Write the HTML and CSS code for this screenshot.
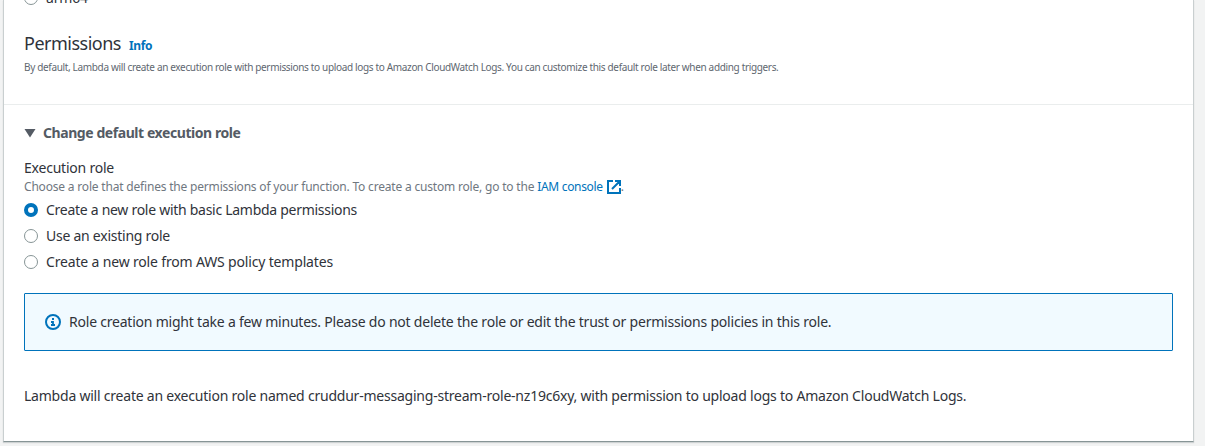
FILE: index.html
```html
<!DOCTYPE html>
<html lang="en"><head><meta charset="utf-8"><title>Create function</title>
<link rel="stylesheet" href="styles.css"></head>
<body>
<main class="card">
<section class="permissions">
<div class="option arch"><span class="radio"></span><span class="t t-arch">arm64</span></div>
<div class="heading"><h2><span class="t t-perm">Permissions</span></h2><a class="info t t-info">Info</a></div>
<p class="desc"><span class="t t-desc">By default, Lambda will create an execution role with permissions to upload logs to Amazon CloudWatch Logs. You can customize this default role later when adding triggers.</span></p>
</section>
<section class="role">
<div class="expander"><svg width="12" height="10" viewBox="0 0 12 10"><path d="M.5 1h11L6 9.5z" fill="#545b64"/></svg><span class="t t-exp">Change default execution role</span></div>
<div class="label"><span class="t t-label">Execution role</span></div>
<div class="hint"><span class="t t-hint">Choose a role that defines the permissions of your function. To create a custom role, go to the</span><a class="t t-iam">IAM console</a><svg class="ext" width="16" height="16" viewBox="0 0 16 16" fill="none" stroke="#0073bb" stroke-width="2"><path d="M7 2H2v12h12V9M9 2h5v5M6 10l8-8"/></svg><span class="dot">.</span></div>
<div class="options">
<div class="option"><span class="radio on"></span><span class="t t-o1">Create a new role with basic Lambda permissions</span></div>
<div class="option"><span class="radio"></span><span class="t t-o2">Use an existing role</span></div>
<div class="option"><span class="radio"></span><span class="t t-o3">Create a new role from AWS policy templates</span></div>
</div>
<div class="alert"><svg width="16" height="16" viewBox="0 0 16 16" fill="none" stroke="#0073bb" stroke-width="2"><circle cx="8" cy="8" r="7"/><path d="M7 5h2M6 8h2v3M6 11h4" stroke-width="1.8"/></svg><span class="t t-alert">Role creation might take a few minutes. Please do not delete the role or edit the trust or permissions policies in this role.</span></div>
<p class="note"><span class="t t-note">Lambda will create an execution role named cruddur-messaging-stream-role-nz19c6xy, with permission to upload logs to Amazon CloudWatch Logs.</span></p>
</section>
</main>
</body></html>
```
FILE: styles.css
```css
*{box-sizing:border-box}
body{margin:0;height:446px;overflow:hidden;background:#f2f3f3;font:14px/22px "Noto Sans",sans-serif;color:#30333a}
.card{width:1191px;height:442px;margin-left:3px;background:#fff;border:1px solid #c9cfd0;border-top:0;border-bottom-color:#879596;box-shadow:0 1px 1px rgba(0,28,36,.15);overflow:hidden}
.t{white-space:nowrap}
.permissions{display:flow-root;height:105px;border-bottom:1px solid #eaeded;padding:0 20px}
.option{display:flex;align-items:center;gap:8px;height:26px}
.radio{width:14px;height:14px;flex:none;border:1px solid #879596;border-radius:50%;background:#fff}
.radio.on{border:4px solid #0073bb}
.arch{margin-top:-15px}
.heading{display:flex;align-items:baseline;gap:8px;margin-top:19px;height:27px}
h2{font-size:18px;line-height:27px;font-weight:400;margin:0}
.info{font-size:12px;font-weight:700;color:#0073bb}
.desc{margin:0;font-size:10px;line-height:20px;color:#606770}
.role{padding:17px 20px}
.expander{display:flex;align-items:center;gap:7px;font-weight:700;color:#545b64}
.label{margin-top:13px}
.hint{display:flex;align-items:center;font-size:12px;line-height:16px;color:#6f777f}
.t-iam{color:#0073bb;margin-left:3px}
.ext{margin-left:3px}
.dot{margin-left:-1px}
.options{margin-top:2px}
.alert{display:flex;align-items:center;gap:8px;height:58px;margin-top:18px;padding:0 20px;background:#f1faff;border:1px solid #0073bb;border-radius:1px}
.note{margin:34px 0 0}
.t-arch{letter-spacing:-.2px}
.t-perm{letter-spacing:-.5px}
.t-info{letter-spacing:-.4px}
.t-desc{letter-spacing:-.34px}
.t-exp{letter-spacing:-.43px}
.t-label{letter-spacing:-.22px}
.t-hint{letter-spacing:-.19px}
.t-iam{letter-spacing:-.33px}
.t-o1{letter-spacing:-.28px}
.t-o2{letter-spacing:-.25px}
.t-o3{letter-spacing:-.165px}
.t-alert{letter-spacing:-.216px}
.t-note{letter-spacing:-.223px}
```
